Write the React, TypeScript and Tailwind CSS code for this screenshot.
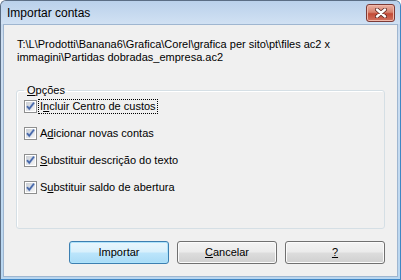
import React from "react";

function CheckBox() {
  return (
    <svg width="13" height="13" viewBox="0 0 13 13" className="shrink-0">
      <defs>
        <linearGradient id="cbIn" x1="0" y1="0" x2="1" y2="1">
          <stop offset="0" stopColor="#cbcfd5" />
          <stop offset="1" stopColor="#f6f6f6" />
        </linearGradient>
      </defs>
      <rect x="0.5" y="0.5" width="12" height="12" fill="#ffffff" stroke="#8e8f8f" />
      <rect x="2" y="2" width="9" height="9" fill="url(#cbIn)" />
      <path d="M3 6.2 L5.3 8.8 L10 2.6" fill="none" stroke="#a9bbdc" strokeWidth="2.6" />
      <path d="M3 6.2 L5.3 8.8 L10 2.6" fill="none" stroke="#4465a6" strokeWidth="1.5" />
    </svg>
  );
}

function Option({ children, focus = false }: any) {
  return (
    <div className="flex items-center gap-[1px] h-[15px]">
      <CheckBox />
      <span
        className={
          focus
            ? "px-[1px] leading-[13px] border border-dotted border-black"
            : "px-[1px] leading-[13px] border border-transparent"
        }
      >
        {children}
      </span>
    </div>
  );
}

function Btn({ children, primary = false }: any) {
  return (
    <button
      className={
        primary
          ? "w-[100px] h-[23px] rounded-[3px] border border-[#3c7fb1] bg-[linear-gradient(#e9f6fd_0%,#d8f0fc_48%,#bce5fb_52%,#a9dbf6_100%)] shadow-[inset_0_0_0_1px_#aee3fb] text-[11px] leading-[13px] text-black"
          : "w-[100px] h-[23px] rounded-[3px] border border-[#707070] bg-[linear-gradient(#f3f3f3_0%,#ebebeb_48%,#dddddd_52%,#cfcfcf_100%)] shadow-[inset_0_0_0_1px_#fbfbfb] text-[11px] leading-[13px] text-black"
      }
    >
      {children}
    </button>
  );
}

export default function App() {
  return (
    <div className="w-[401px] h-[280px] flex flex-col rounded-t-[6px] border border-[#5b6e85] border-r-[#3f86c4] border-b-[#3f86c4] bg-[linear-gradient(#b9d0ea,#cfdff1_40px,#b8d6f0)] font-['Liberation_Sans',Arial,sans-serif] text-[11px] text-black overflow-hidden">
      {/* TITLE BAR */}
      <div className="h-[23px] shrink-0 flex items-center justify-between pl-[6px] pr-[5px] bg-[linear-gradient(#bad1eb,#d1e1f3)]">
        <span className="text-[12px] leading-[14px] pt-[1px]">Importar contas</span>
        <div className="w-[29px] h-[18px] mt-[1px] rounded-[3px] border border-[#7c3a36] bg-[linear-gradient(#eab1a3_0%,#d7826f_45%,#c24a36_55%,#d27361_100%)] shadow-[inset_0_0_0_1px_#f1b9ab] flex items-center justify-center">
          <svg width="12" height="10" viewBox="0 0 12 10">
            <path d="M2 1.5 L10 8.5 M10 1.5 L2 8.5" stroke="#5b2520" strokeWidth="4" strokeLinecap="round" />
            <path d="M2 1.5 L10 8.5 M10 1.5 L2 8.5" stroke="#ffffff" strokeWidth="2.4" strokeLinecap="round" />
          </svg>
        </div>
      </div>

      {/* CLIENT */}
      <div className="flex-1 mx-[2px] mb-[2px] flex flex-col border border-[#9fb6d0] bg-[#f0f0f0] px-[12px]">
        <p className="mt-[13px] pl-[1px] leading-[13px]">
          T:\L\Prodotti\Banana6\Grafica\Corel\grafica per sito\pt\files ac2 x
          <br />
          immagini\Partidas dobradas_empresa.ac2
        </p>

        <fieldset className="mt-[20px] h-[145px] rounded-[3px] border border-[#d5dfe5] shadow-[inset_1px_1px_0_#ffffff] pl-[7px]">
          <legend className="px-[3px] leading-[13px]">
            <u>O</u>pções
          </legend>
          <div className="flex flex-col gap-[12px] pt-[2px]">
            <Option focus>
              I<u>n</u>cluir Centro de custos
            </Option>
            <Option>
              A<u>d</u>icionar novas contas
            </Option>
            <Option>
              <u>S</u>ubstituir descrição do texto
            </Option>
            <Option>
              S<u>u</u>bstituir saldo de abertura
            </Option>
          </div>
        </fieldset>

        <div className="mt-[12px] flex justify-end gap-[8px]">
          <Btn primary>Importar</Btn>
          <Btn>
            <u>C</u>ancelar
          </Btn>
          <Btn>
            <u>?</u>
          </Btn>
        </div>
      </div>
    </div>
  );
}
